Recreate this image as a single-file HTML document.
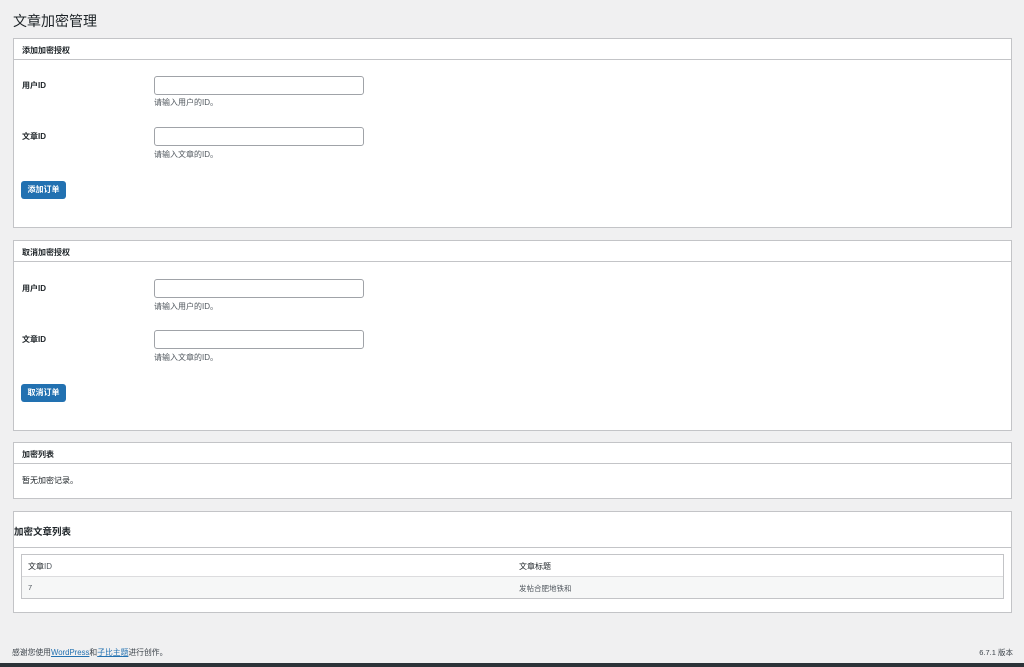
<!DOCTYPE html>
<html><head><meta charset="utf-8"><style>
*{box-sizing:border-box;margin:0;padding:0}
body{width:1024px;height:667px;background:#f0f0f1;font-family:"Liberation Sans","Noto Sans CJK SC",sans-serif;font-size:8px;color:#1d2327;position:relative;overflow:hidden}
h1{position:absolute;left:13px;top:11px;font-size:14px;font-weight:400;color:#1d2327}
.box{position:absolute;left:13px;width:999px;background:#fff;border:1px solid #c3c4c7}
.hd{height:21px;border-bottom:1px solid #c3c4c7;font-weight:bold;padding:6px 8px 0;font-size:8px}
.lbl{position:absolute;left:8px;font-weight:bold}
.in{position:absolute;left:140px;width:210px;height:19px;border:1px solid #a0a3a8;border-radius:3px}
.desc{position:absolute;left:140px;color:#50575e}
.btn{position:absolute;left:7px;width:45px;height:18px;background:#2271b1;color:#fff;border-radius:3px;text-align:center;line-height:18px;font-weight:bold}
a{color:#2271b1}
</style></head><body>
<h1>文章加密管理</h1>
<div class="box" style="top:38px;height:190px">
<div class="hd">添加加密授权</div>
<div class="lbl" style="top:41px">用户ID</div><div class="in" style="top:37px"></div><div class="desc" style="top:58px">请输入用户的ID。</div>
<div class="lbl" style="top:92px">文章ID</div><div class="in" style="top:88px"></div><div class="desc" style="top:110px">请输入文章的ID。</div>
<div class="btn" style="top:142px">添加订单</div>
</div>
<div class="box" style="top:240px;height:191px">
<div class="hd">取消加密授权</div>
<div class="lbl" style="top:42px">用户ID</div><div class="in" style="top:38px"></div><div class="desc" style="top:60px">请输入用户的ID。</div>
<div class="lbl" style="top:93px">文章ID</div><div class="in" style="top:89px"></div><div class="desc" style="top:111px">请输入文章的ID。</div>
<div class="btn" style="top:143px">取消订单</div>
</div>
<div class="box" style="top:442px;height:57px">
<div class="hd">加密列表</div>
<div style="position:absolute;left:8px;top:32px">暂无加密记录。</div>
</div>
<div class="box" style="top:511px;height:102px">
<div style="height:36px;border-bottom:1px solid #c3c4c7;font-weight:bold;font-size:9.5px;padding-top:12px">加密文章列表</div>
<div style="position:absolute;left:7px;top:42px;width:983px;height:45px;border:1px solid #c3c4c7">
<div style="height:22px;border-bottom:1px solid #dcdcde;position:relative"><span style="position:absolute;left:6px;top:6px">文章<span style="color:#50575e">ID</span></span><span style="position:absolute;left:497px;top:6px">文章标题</span></div>
<div style="height:21px;background:#f6f7f7;position:relative;color:#50575e;font-size:7.5px"><span style="position:absolute;left:6px;top:6px">7</span><span style="position:absolute;left:497px;top:6px">发帖合肥地铁和</span></div>
</div>
</div>
<div style="position:absolute;left:12px;top:647px;font-size:7.8px;color:#3c434a">感谢您使用<a style="text-decoration:underline">WordPress</a>和<a style="text-decoration:underline">子比主题</a>进行创作。</div>
<div style="position:absolute;right:11px;top:647px;font-size:7.5px;color:#3c434a">6.7.1 版本</div>
<div style="position:absolute;left:0;top:663px;width:1024px;height:4px;background:#2c3338"></div>
</body></html>
